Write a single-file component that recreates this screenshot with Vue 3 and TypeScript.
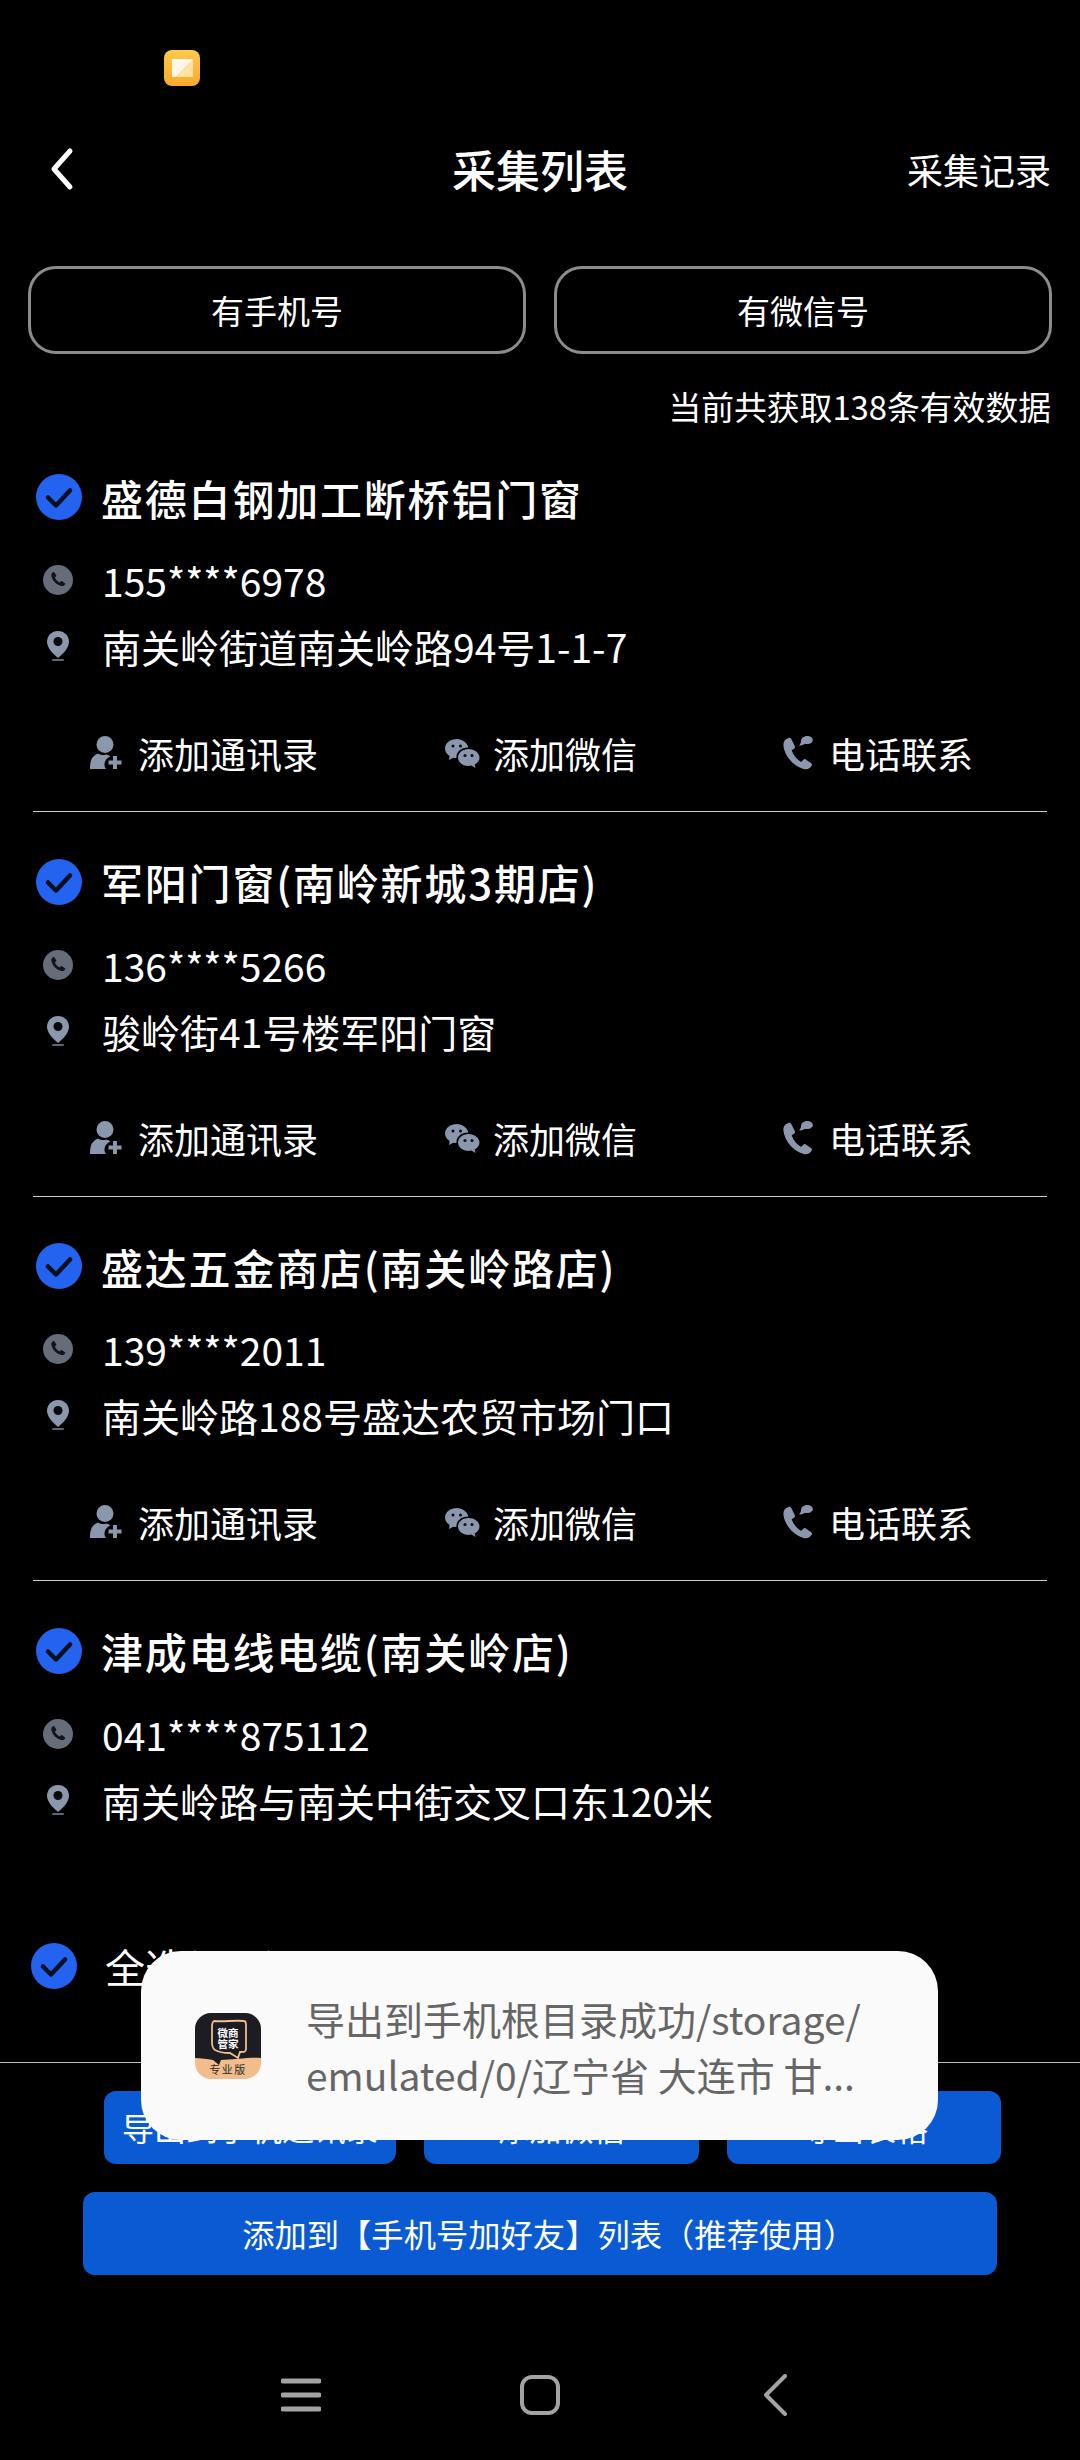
<script setup lang="ts">
interface Shop {
  name: string
  phone: string
  address: string
}

const shops: Shop[] = [
  { name: '盛德白钢加工断桥铝门窗', phone: '155****6978', address: '南关岭街道南关岭路94号1-1-7' },
  { name: '军阳门窗(南岭新城3期店)', phone: '136****5266', address: '骏岭街41号楼军阳门窗' },
  { name: '盛达五金商店(南关岭路店)', phone: '139****2011', address: '南关岭路188号盛达农贸市场门口' },
  { name: '津成电线电缆(南关岭店)', phone: '041****875112', address: '南关岭路与南关中街交叉口东120米' }
]
</script>

<template>
  <div class="page">
    <div class="status">
      <svg class="status-icon" width="36" height="36" viewBox="0 0 36 36">
        <defs>
          <linearGradient id="st" x1="0" y1="0" x2="0" y2="1">
            <stop offset="0" stop-color="#ffc94a" />
            <stop offset="1" stop-color="#fba92c" />
          </linearGradient>
        </defs>
        <rect width="36" height="36" rx="8" fill="url(#st)" />
        <rect x="8" y="9" width="21" height="18" fill="#ffe2a3" />
        <path d="M8 9h21L11 27H8z" fill="#fff8ea" />
      </svg>
    </div>

    <header class="topbar">
      <svg class="back" width="28" height="44" viewBox="0 0 28 44">
        <path d="M22 4 6 22l16 18" fill="none" stroke="#fff" stroke-width="5" stroke-linecap="round" stroke-linejoin="round" />
      </svg>
      <h1 class="title">采集列表</h1>
      <span class="record">采集记录</span>
    </header>

    <div class="filters">
      <button class="filter">有手机号</button>
      <button class="filter">有微信号</button>
    </div>

    <p class="count">当前共获取138条有效数据</p>

    <section class="list">
      <article v-for="(shop, index) in shops" :key="shop.name" class="shop">
        <div class="shop-head">
          <svg class="check" width="46" height="46" viewBox="0 0 46 46">
            <circle cx="23" cy="23" r="23" fill="#2463f0" />
            <path d="M12 23.5l8 8 14-15" fill="none" stroke="#0b1020" stroke-width="4.5" stroke-linecap="round" stroke-linejoin="round" />
          </svg>
          <span class="shop-name">{{ shop.name }}</span>
        </div>
        <div class="info phone">
          <svg class="info-icon" width="30" height="30" viewBox="0 0 30 30">
            <circle cx="15" cy="15" r="15" fill="#666c7a" />
            <path d="M10.2 7.2c-1.5.6-2.2 2-1.8 3.800 1.200 5 4.700 8.500 9.800 10 1.700.4 3.200-.3 3.900-1.800.2-.5 0-1-.4-1.300l-2.700-1.700c-.4-.3-1-.2-1.300.2l-1 1.100c-2.200-1-3.800-2.700-4.900-4.900l1.200-1c.4-.3.500-.9.200-1.300l-1.700-2.700c-.3-.4-.8-.6-1.300-.4z" fill="#12141a" />
          </svg>
          <span>{{ shop.phone }}</span>
        </div>
        <div class="info">
          <svg class="info-icon" width="30" height="32" viewBox="0 0 30 32">
            <path d="M15 1C8.400 1 4 6 4 11.800 4 18 10 24 15 28c5-4 11-10 11-16.200C26 6 21.600 1 15 1z" fill="#8a97ad" />
            <circle cx="15" cy="11.500" r="4.500" fill="#0a0a0a" />
            <rect x="9" y="29" width="12" height="2" rx="1" fill="#5d6675" />
          </svg>
          <span>{{ shop.address }}</span>
        </div>
        <div v-if="index < shops.length - 1" class="actions">
          <div class="action">
            <svg width="36" height="36" viewBox="0 0 36 36">
              <circle cx="16" cy="9.500" r="8.500" fill="#8a97ad" />
              <path d="M1 34c0-9 2-13 8-15.500 2 1.500 5 2 8.500 1 1.500 .5 2.800 1 3.700 2-3.500 1.500-5.700 4.500-5.700 8 0 1.800.5 3.300 1.500 4.500z" fill="#8a97ad" />
              <path d="M26 21v13M19.500 27.500h13" stroke="#8a97ad" stroke-width="4" />
            </svg>
            <span>添加通讯录</span>
          </div>
          <div class="action">
            <svg width="36" height="30" viewBox="0 0 36 30">
              <path d="M13 1C6.400 1 1 5 1 10.500c0 3.200 1.800 5.800 4.600 7.500L5 22l4.300-2.300c1 .2 2 .4 3.200 .4C12 14 17 9.500 24.500 9.600 23 4.500 18.500 1 13 1z" fill="#8a97ad" />
              <path d="M24.500 11C18.800 11 14 14.700 14 19.500S18.800 28 24.500 28c1 0 2-.1 2.900-.4L31.500 30l-.8-3.600c3-1.600 4.800-4 4.800-6.900 0-4.800-5.200-8.500-11-8.500z" fill="#8a97ad" />
              <circle cx="9" cy="8" r="1.500" fill="#0a0a0a" />
              <circle cx="16.500" cy="8" r="1.500" fill="#0a0a0a" />
              <circle cx="21" cy="17.500" r="1.500" fill="#0a0a0a" />
              <circle cx="28" cy="17.500" r="1.500" fill="#0a0a0a" />
            </svg>
            <span>添加微信</span>
          </div>
          <div class="action">
            <svg width="34" height="36" viewBox="0 0 34 36">
              <path d="M6.500 3C3 4 1 6.500 1.500 11c1 9.500 9.500 20 20 23 3.500 1 6.800-.5 8.300-3.500.4-.9.200-1.700-.6-2.300l-5.400-3.800c-.8-.5-1.700-.4-2.300.2l-2.300 2.300c-4.500-2.500-8-7-9.500-11.700l2.600-1.700c.8-.5 1-1.400.6-2.200L9.300 4c-.5-.9-1.600-1.400-2.800-1z" fill="#8a97ad" />
              <path d="M25 1c-3.300 0-6 2.300-6 5.200 0 1-.3 2.500-2 4.300 2.600 0 4.600-.9 5.900-1.800C23.500 9 24.300 9.100 25 9.100c3.200 0 5.800-1.700 5.800-4.100S28.200 1 25 1z" fill="#8a97ad" />
            </svg>
            <span>电话联系</span>
          </div>
        </div>
      </article>
    </section>

    <div class="select-all">
      <svg width="46" height="46" viewBox="0 0 46 46">
        <circle cx="23" cy="23" r="23" fill="#2463f0" />
        <path d="M12 23.500l8 8 14-15" fill="none" stroke="#0b1020" stroke-width="4.500" stroke-linecap="round" stroke-linejoin="round" />
      </svg>
      <span>全选(138)</span>
    </div>

    <footer class="footer">
      <div class="btn-row">
        <button class="btn">导出到手机通讯录</button>
        <button class="btn">添加微信</button>
        <button class="btn">导出表格</button>
      </div>
      <button class="btn wide">添加到【手机号加好友】列表（推荐使用）</button>
    </footer>

    <nav class="nav">
      <svg width="40" height="36" viewBox="0 0 40 36">
        <path d="M2 4h36M2 18h36M2 32h36" stroke="#a3a3a3" stroke-width="5" stroke-linecap="round" />
      </svg>
      <svg width="40" height="40" viewBox="0 0 40 40">
        <rect x="2" y="2" width="36" height="36" rx="10" fill="none" stroke="#a3a3a3" stroke-width="4" />
      </svg>
      <svg class="nav-back" width="26" height="42" viewBox="0 0 26 42">
        <path d="M23 2 4 21l19 19" fill="none" stroke="#a3a3a3" stroke-width="4" stroke-linecap="round" stroke-linejoin="round" />
      </svg>
    </nav>

    <div class="toast">
      <svg class="logo" width="66" height="66" viewBox="0 0 66 66">
        <rect width="66" height="66" rx="16" fill="#f2bd8c" />
        <path d="M0 16A16 16 0 0 1 16 0h34a16 16 0 0 1 16 16v29c-10-1-30 2-40 2l-2 5-6-5C12 46 6 45 0 45z" fill="#1c1c22" />
        <path d="M19 8c10 1 20-1 30 0 2 0 2 2 2 4v24c0 3-2 3-5 3h-1l-2 6-8-5c-5 0-10 0-15-3-3-2-3-5-3-8V14c0-3 0-5 2-6z" fill="#1c1c22" stroke="#f2bd8c" stroke-width="1.800" />
        <text x="33" y="24" text-anchor="middle" class="logo-text">微商</text>
        <text x="33" y="35" text-anchor="middle" class="logo-text">管家</text>
        <text x="33" y="61" text-anchor="middle" class="logo-sub">专业版</text>
      </svg>
      <div class="toast-text">
        <span>导出到手机根目录成功/storage/</span>
        <span>emulated/0/辽宁省 大连市 甘...</span>
      </div>
    </div>
  </div>
</template>

<style scoped>
.page {
  position: relative;
  width: 1080px;
  height: 2460px;
  overflow: hidden;
  background: #000;
  color: #fff;
  font-family: "Noto Sans CJK SC", "Noto Sans", sans-serif;
}

.status {
  height: 120px;
  padding: 50px 0 0 164px;
  box-sizing: border-box;
}

.status-icon {
  display: block;
}

.topbar {
  display: flex;
  align-items: center;
  justify-content: space-between;
  height: 98px;
  padding: 0 29px 0 48px;
  position: relative;
}

.back {
  display: block;
}

.title {
  margin: 0;
  position: absolute;
  left: 0;
  right: 0;
  text-align: center;
  font-size: 44px;
  font-weight: 500;
  line-height: 98px;
}

.record {
  font-size: 36px;
  line-height: 96px;
}

.filters {
  display: grid;
  grid-template-columns: 1fr 1fr;
  gap: 28px;
  margin: 48px 28px 0;
}

.filter {
  height: 88px;
  border: 3px solid #8c8c8c;
  border-radius: 28px;
  background: #000;
  color: #fff;
  font: inherit;
  font-size: 33px;
}

.count {
  margin: 30px 29px 0 0;
  text-align: right;
  font-size: 32.800px;
  line-height: 44px;
}

.list {
  margin-top: 29px;
}

.shop {
  box-sizing: border-box;
  height: 384.500px;
  padding: 0 33px;
}

.shop:last-child {
  height: auto;
}

.shop-head {
  display: flex;
  align-items: center;
  gap: 19px;
  height: 80px;
  padding-left: 3px;
}

.shop-name {
  font-size: 42px;
  font-weight: 500;
  letter-spacing: 1.800px;
}

.info {
  display: flex;
  align-items: center;
  height: 66px;
  font-size: 39px;
  padding-left: 10px;
}

.phone {
  margin-top: 10px;
}

.info-icon {
  flex: none;
  margin-right: 29px;
}

.actions {
  height: 133px;
  border-bottom: 1px solid #cfcfcf;
  box-sizing: border-box;
  display: grid;
  grid-template-columns: 355px 338px 1fr;
  align-items: center;
  padding: 16px 0 0 56px;
  font-size: 36px;
}

.action {
  display: flex;
  align-items: center;
  gap: 13px;
}

.action svg {
  flex: none;
  display: block;
}

.select-all {
  display: flex;
  align-items: center;
  gap: 28px;
  height: 60px;
  margin-top: 103px;
  padding-left: 31px;
  font-size: 40px;
}

.footer {
  margin-top: 66px;
  border-top: 1px solid #bdbdbd;
  padding-top: 28px;
}

.btn-row {
  display: grid;
  grid-template-columns: 292px 275px 274px;
  gap: 28px;
  margin-left: 104px;
}

.btn {
  border: 0;
  border-radius: 12px;
  background: #0a5bd3;
  color: #fff;
  font: inherit;
  font-size: 32px;
  height: 73px;
  padding: 0;
  white-space: nowrap;
}

.wide {
  display: block;
  width: 914px;
  height: 83px;
  margin: 28px 0 0 83px;
  padding-left: 18px;
  font-size: 32.300px;
}

.nav {
  display: flex;
  align-items: center;
  padding-left: 281px;
  margin-top: 100px;
  gap: 199px;
  height: 40px;
}

.nav-back {
  margin-left: 3px;
}

.toast {
  position: absolute;
  left: 141px;
  top: 1951px;
  width: 797px;
  height: 189px;
  box-sizing: border-box;
  display: flex;
  align-items: center;
  padding-left: 54px;
  gap: 45px;
  border-radius: 40px;
  background: #fafafa;
}

.logo {
  flex: none;
  display: block;
}

.logo-text {
  fill: #fff;
  font-size: 10.500px;
  font-weight: 700;
}

.logo-sub {
  fill: #2a2a2a;
  font-size: 11px;
  letter-spacing: 1.500px;
}

.toast-text {
  display: flex;
  flex-direction: column;
  color: #666;
  font-size: 39px;
  line-height: 56px;
  white-space: nowrap;
}
</style>

<style>
body {
  background: #000;
}
</style>
